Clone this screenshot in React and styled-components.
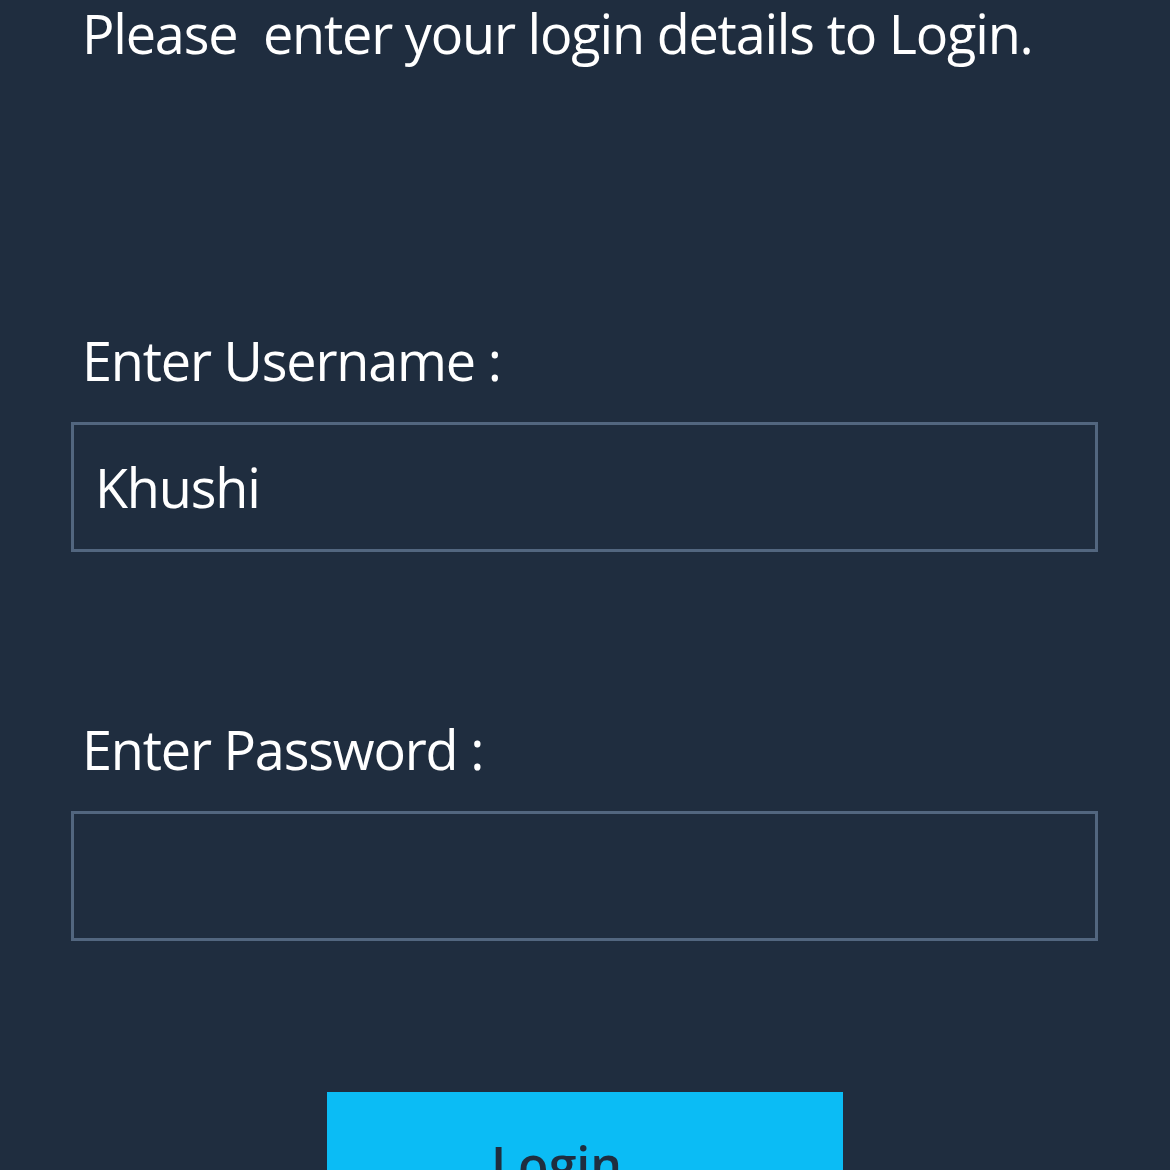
import styled, { createGlobalStyle } from 'styled-components'

const GlobalStyle = createGlobalStyle`
  html, body {
    margin: 0;
    background-color: #1f2d3f;
  }
  body {
    font-family: 'Open Sans', 'Noto Sans', sans-serif;
    color: #ffffff;
  }
`

const Page = styled.main`
  min-height: 1170px;
  padding: 0 72px 0 71px;
  display: flex;
  flex-direction: column;
  overflow: hidden;
`

const Intro = styled.p`
  margin: 0 0 261px 11px;
  font-size: 54px;
  line-height: 66px;
  letter-spacing: -1.2px;
  white-space: pre;
`

const Field = styled.label`
  display: flex;
  flex-direction: column;
  gap: 29px;
  margin-bottom: ${({ $gap }) => $gap || 0}px;
`

const FieldLabel = styled.span`
  margin-left: 11px;
  font-size: 54px;
  line-height: 66px;
  letter-spacing: -1.2px;
`

const Input = styled.input`
  box-sizing: border-box;
  width: 100%;
  height: 130px;
  margin: 0;
  padding: 0 21px;
  border: 3px solid #52667f;
  background: transparent;
  color: #ffffff;
  font-family: inherit;
  font-size: 54px;
  letter-spacing: -1.2px;
  outline: none;
`

const Button = styled.button`
  align-self: center;
  box-sizing: border-box;
  width: 516px;
  height: 150px;
  margin: 0;
  padding: 38px 56px 0 0;
  border: none;
  background-color: #0bbcf5;
  color: #1f2d3f;
  font-family: inherit;
  font-size: 50px;
  font-weight: 600;
  line-height: normal;
  display: flex;
  justify-content: center;
  align-items: flex-start;
`

const App = () => (
  <>
    <GlobalStyle />
    <Page>
      <Intro>Please  enter your login details to Login.</Intro>
      <Field $gap={164}>
        <FieldLabel>Enter Username :</FieldLabel>
        <Input type="text" defaultValue="Khushi" />
      </Field>
      <Field $gap={151}>
        <FieldLabel>Enter Password :</FieldLabel>
        <Input type="password" />
      </Field>
      <Button type="button">Login</Button>
    </Page>
  </>
)

export default App
